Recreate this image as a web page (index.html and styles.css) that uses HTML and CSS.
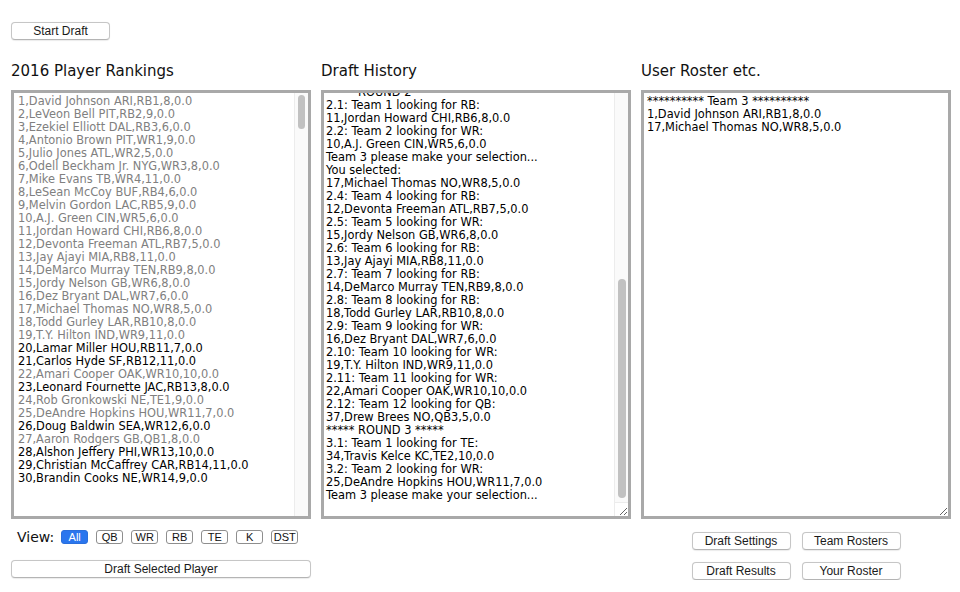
FILE: index.html
```html
<!DOCTYPE html>
<html lang="en">
<head>
<meta charset="utf-8">
<title>Draft</title>
<link rel="stylesheet" href="styles.css">
</head>
<body>
<div class="app">
  <div class="topbar">
    <button class="btn btn-start">Start Draft</button>
  </div>
  <div class="columns">
    <section class="col">
      <h2 class="col-title">2016 Player Rankings</h2>
      <div class="box listbox">
        <div class="rank-list">
          <div class="row taken">1,David Johnson ARI,RB1,8,0.0</div>
          <div class="row taken">2,LeVeon Bell PIT,RB2,9,0.0</div>
          <div class="row taken">3,Ezekiel Elliott DAL,RB3,6,0.0</div>
          <div class="row taken">4,Antonio Brown PIT,WR1,9,0.0</div>
          <div class="row taken">5,Julio Jones ATL,WR2,5,0.0</div>
          <div class="row taken">6,Odell Beckham Jr. NYG,WR3,8,0.0</div>
          <div class="row taken">7,Mike Evans TB,WR4,11,0.0</div>
          <div class="row taken">8,LeSean McCoy BUF,RB4,6,0.0</div>
          <div class="row taken">9,Melvin Gordon LAC,RB5,9,0.0</div>
          <div class="row taken">10,A.J. Green CIN,WR5,6,0.0</div>
          <div class="row taken">11,Jordan Howard CHI,RB6,8,0.0</div>
          <div class="row taken">12,Devonta Freeman ATL,RB7,5,0.0</div>
          <div class="row taken">13,Jay Ajayi MIA,RB8,11,0.0</div>
          <div class="row taken">14,DeMarco Murray TEN,RB9,8,0.0</div>
          <div class="row taken">15,Jordy Nelson GB,WR6,8,0.0</div>
          <div class="row taken">16,Dez Bryant DAL,WR7,6,0.0</div>
          <div class="row taken">17,Michael Thomas NO,WR8,5,0.0</div>
          <div class="row taken">18,Todd Gurley LAR,RB10,8,0.0</div>
          <div class="row taken">19,T.Y. Hilton IND,WR9,11,0.0</div>
          <div class="row">20,Lamar Miller HOU,RB11,7,0.0</div>
          <div class="row">21,Carlos Hyde SF,RB12,11,0.0</div>
          <div class="row taken">22,Amari Cooper OAK,WR10,10,0.0</div>
          <div class="row">23,Leonard Fournette JAC,RB13,8,0.0</div>
          <div class="row taken">24,Rob Gronkowski NE,TE1,9,0.0</div>
          <div class="row taken">25,DeAndre Hopkins HOU,WR11,7,0.0</div>
          <div class="row">26,Doug Baldwin SEA,WR12,6,0.0</div>
          <div class="row taken">27,Aaron Rodgers GB,QB1,8,0.0</div>
          <div class="row">28,Alshon Jeffery PHI,WR13,10,0.0</div>
          <div class="row">29,Christian McCaffrey CAR,RB14,11,0.0</div>
          <div class="row">30,Brandin Cooks NE,WR14,9,0.0</div>
        </div>
        <div class="vscroll">
          <div class="vthumb list-thumb"></div>
        </div>
      </div>
      <div class="view-row">
        <span class="view-label">View:</span>
        <button class="tog active">All</button>
        <button class="tog">QB</button>
        <button class="tog">WR</button>
        <button class="tog">RB</button>
        <button class="tog">TE</button>
        <button class="tog">K</button>
        <button class="tog">DST</button>
      </div>
      <button class="btn btn-wide">Draft Selected Player</button>
    </section>

    <section class="col">
      <h2 class="col-title">Draft History</h2>
      <div class="box history">
        <div class="history-view">
          <div class="history-text">***** ROUND 1 *****
1.1: Team 1 looking for RB:
2,LeVeon Bell PIT,RB2,9,0.0
1.2: Team 2 looking for RB:
3,Ezekiel Elliott DAL,RB3,6,0.0
Team 3 please make your selection...
You selected:
1,David Johnson ARI,RB1,8,0.0
1.4: Team 4 looking for WR:
4,Antonio Brown PIT,WR1,9,0.0
1.5: Team 5 looking for WR:
5,Julio Jones ATL,WR2,5,0.0
1.6: Team 6 looking for WR:
6,Odell Beckham Jr. NYG,WR3,8,0.0
1.7: Team 7 looking for WR:
7,Mike Evans TB,WR4,11,0.0
1.8: Team 8 looking for RB:
8,LeSean McCoy BUF,RB4,6,0.0
1.9: Team 9 looking for RB:
9,Melvin Gordon LAC,RB5,9,0.0
1.10: Team 10 looking for TE:
24,Rob Gronkowski NE,TE1,9,0.0
1.11: Team 11 looking for QB:
27,Aaron Rodgers GB,QB1,8,0.0
1.12: Team 12 looking for QB:
32,Tom Brady NE,QB2,9,0.0
***** ROUND 2 *****
2.1: Team 1 looking for RB:
11,Jordan Howard CHI,RB6,8,0.0
2.2: Team 2 looking for WR:
10,A.J. Green CIN,WR5,6,0.0
Team 3 please make your selection...
You selected:
17,Michael Thomas NO,WR8,5,0.0
2.4: Team 4 looking for RB:
12,Devonta Freeman ATL,RB7,5,0.0
2.5: Team 5 looking for WR:
15,Jordy Nelson GB,WR6,8,0.0
2.6: Team 6 looking for RB:
13,Jay Ajayi MIA,RB8,11,0.0
2.7: Team 7 looking for RB:
14,DeMarco Murray TEN,RB9,8,0.0
2.8: Team 8 looking for RB:
18,Todd Gurley LAR,RB10,8,0.0
2.9: Team 9 looking for WR:
16,Dez Bryant DAL,WR7,6,0.0
2.10: Team 10 looking for WR:
19,T.Y. Hilton IND,WR9,11,0.0
2.11: Team 11 looking for WR:
22,Amari Cooper OAK,WR10,10,0.0
2.12: Team 12 looking for QB:
37,Drew Brees NO,QB3,5,0.0
***** ROUND 3 *****
3.1: Team 1 looking for TE:
34,Travis Kelce KC,TE2,10,0.0
3.2: Team 2 looking for WR:
25,DeAndre Hopkins HOU,WR11,7,0.0
Team 3 please make your selection...</div>
        </div>
        <div class="vscroll with-corner">
          <div class="vthumb history-thumb"></div>
        </div>
        <div class="corner"></div>
      </div>
    </section>

    <section class="col">
      <h2 class="col-title">User Roster etc.</h2>
      <div class="box roster">
        <div class="roster-text">********** Team 3 **********
1,David Johnson ARI,RB1,8,0.0
17,Michael Thomas NO,WR8,5,0.0</div>
      </div>
      <div class="roster-actions">
        <button class="btn">Draft Settings</button>
        <button class="btn">Team Rosters</button>
        <button class="btn">Draft Results</button>
        <button class="btn">Your Roster</button>
      </div>
    </section>
  </div>
</div>
</body>
</html>
```
FILE: styles.css
```css
html, body {
  margin: 0;
  padding: 0;
  background: #ffffff;
}

.app {
  padding: 22px 0 0 11px;
  font-family: "DejaVu Sans", Verdana, sans-serif;
  color: #000;
}

.btn {
  display: block;
  box-sizing: border-box;
  width: 99px;
  height: 18px;
  padding: 0;
  margin: 0;
  background: #ffffff;
  border: 1px solid #c6c6c6;
  border-bottom-color: #b4b4b4;
  border-radius: 4px;
  box-shadow: 0 0.5px 1px rgba(0, 0, 0, 0.08);
  font-family: "Liberation Sans", Arial, sans-serif;
  font-size: 12px;
  line-height: 15px;
  color: #1a1a1a;
  text-align: center;
}

.columns {
  display: grid;
  grid-template-columns: 300px 310px 310px;
  column-gap: 10px;
  margin-top: 22px;
}

.col {
  display: flex;
  flex-direction: column;
}

.col-title {
  margin: 0;
  font-size: 15px;
  font-weight: normal;
  line-height: 18px;
  color: #111;
}

.box {
  position: relative;
  box-sizing: border-box;
  height: 429px;
  margin-top: 10px;
  border: 3px solid #a9a9a9;
  background: #fff;
  font-size: 11.4px;
  line-height: 13px;
  overflow: hidden;
}

/* scrollbar drawn over the box edge */
.vscroll {
  position: absolute;
  top: 0;
  right: 0;
  bottom: 0;
  width: 14px;
  box-sizing: border-box;
  background: #fafafa;
  border-left: 1px solid #ececec;
}

.vscroll.with-corner {
  bottom: 14px;
}

.vthumb {
  position: absolute;
  left: 3px;
  width: 7px;
  background: #c1c1c1;
  border-radius: 4px;
}

.list-thumb {
  top: 2px;
  height: 34px;
}

.history-thumb {
  top: 186px;
  height: 219px;
  left: 3px;
  width: 8px;
}

.corner {
  position: absolute;
  right: 0;
  bottom: 0;
  width: 14px;
  height: 14px;
  box-sizing: border-box;
  background: #fff;
  border-left: 1px solid #ececec;
  border-top: 1px solid #ececec;
}

.rank-list {
  padding: 2px 0 0 4px;
}

.row {
  white-space: nowrap;
  color: #000;
}

.row.taken {
  color: #808080;
}

.history {
  resize: both;
}

.history-view {
  height: 100%;
  display: flex;
  flex-direction: column-reverse;
  overflow: hidden;
}

.history-text {
  white-space: pre;
  padding: 2px 1px 14px 2px;
}

.roster {
  overflow: auto;
  resize: both;
  padding: 2px 3px;
}

.roster-text {
  white-space: pre;
}

.view-row {
  display: flex;
  align-items: center;
  gap: 8px;
  margin-top: 11px;
  padding-left: 6px;
  height: 14px;
}

.view-label {
  font-size: 14px;
  line-height: 16px;
  margin-right: -1px;
  color: #111;
}

.tog {
  box-sizing: border-box;
  width: 27px;
  height: 14px;
  padding: 0;
  margin: 0;
  border: 1px solid #8e8e8e;
  border-radius: 3px;
  background: #fff;
  font-family: "Liberation Sans", Arial, sans-serif;
  font-size: 11px;
  line-height: 12px;
  color: #111;
  text-align: center;
  overflow: visible;
}

.tog.active {
  background: #2a76ee;
  border-color: #2a6fdc;
  color: #fff;
}

.btn-wide {
  width: 300px;
  margin-top: 16px;
}

.roster-actions {
  display: grid;
  grid-template-columns: 99px 99px;
  column-gap: 11px;
  row-gap: 12px;
  justify-content: center;
  margin-top: 13px;
}
```
